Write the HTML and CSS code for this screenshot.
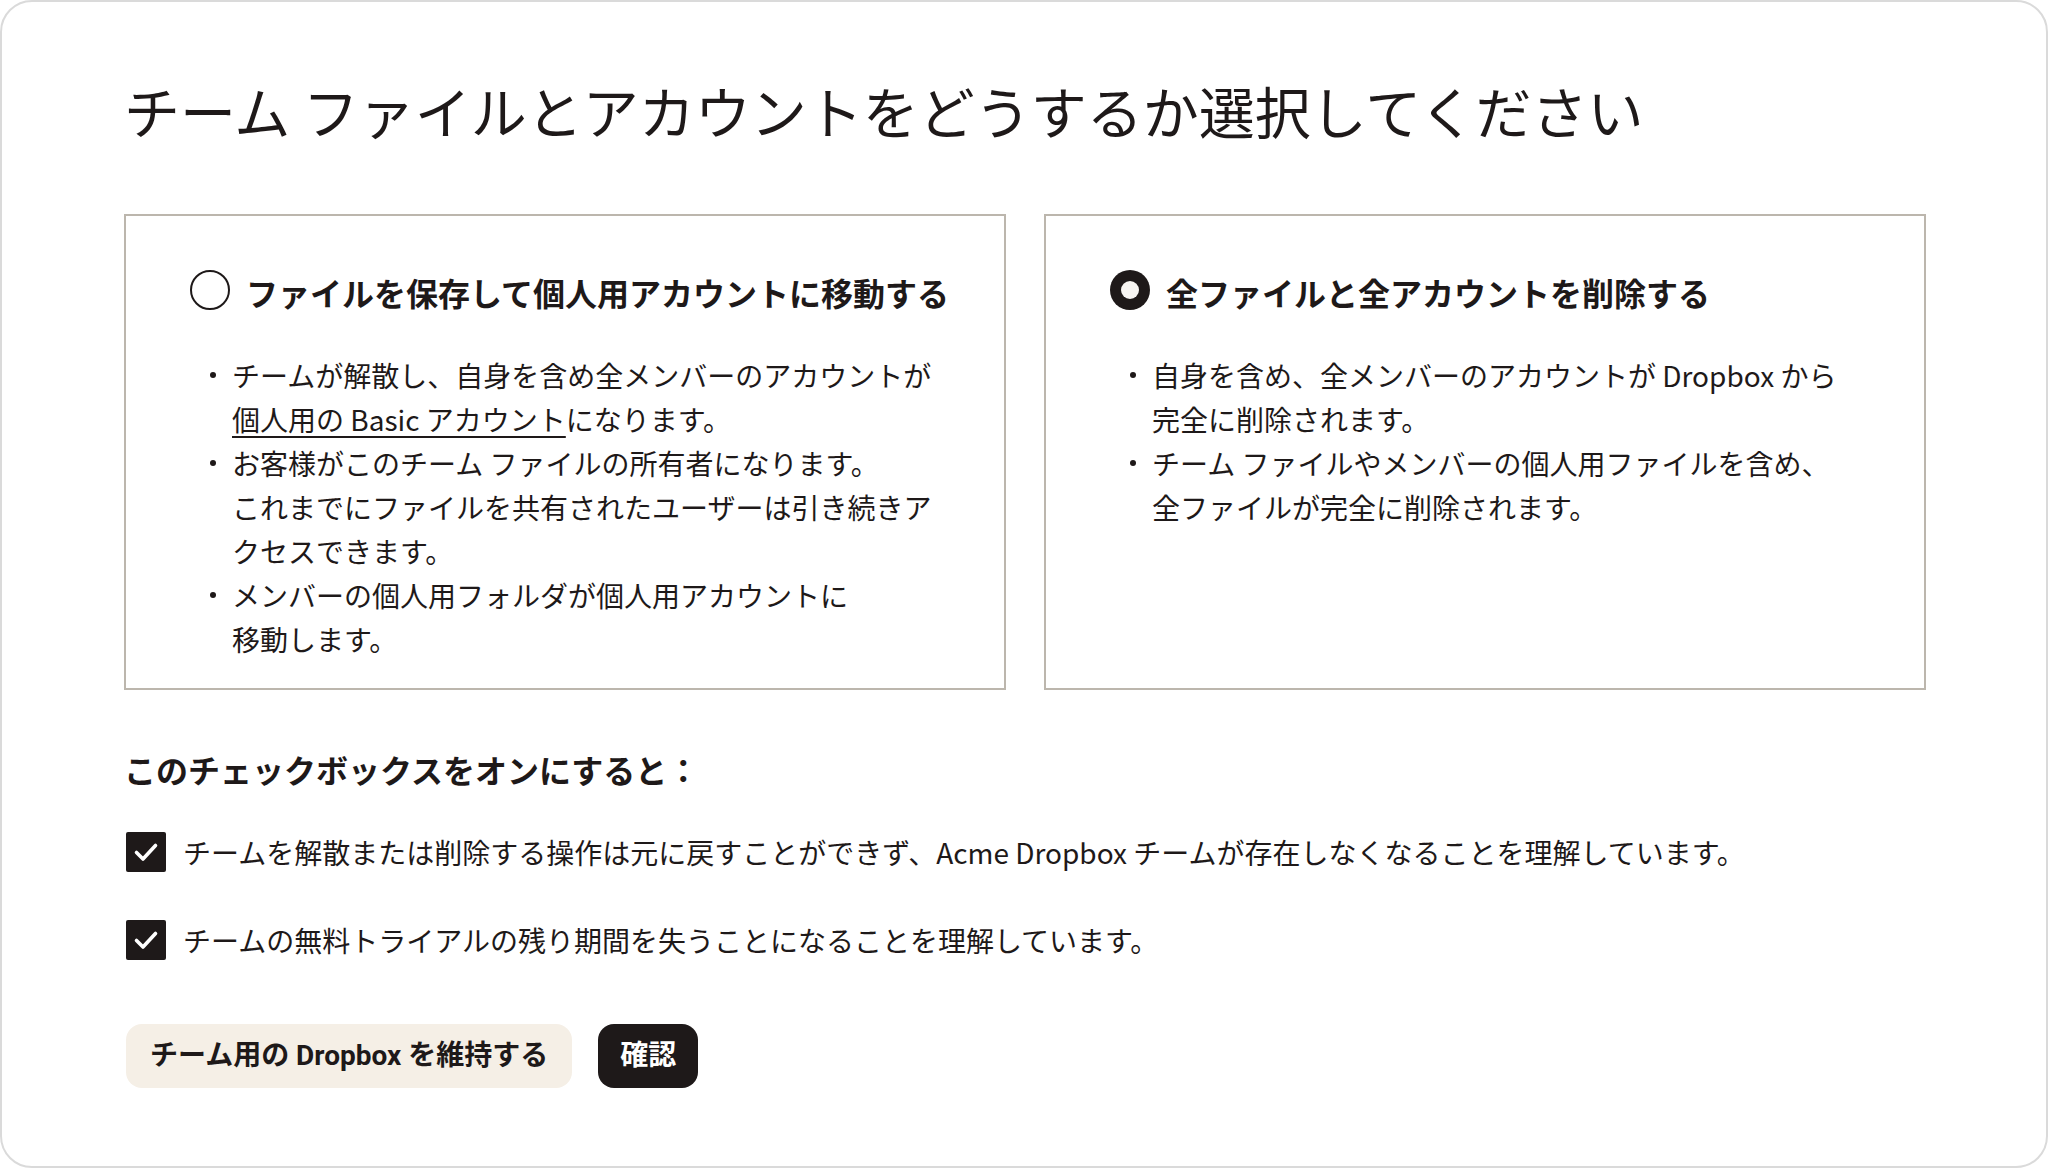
FILE: index.html
```html
<!DOCTYPE html>
<html lang="ja">
<head>
<meta charset="utf-8">
<title>チームの解散</title>
<link rel="stylesheet" href="styles.css">
</head>
<body>
<div class="frame">
  <h1 class="title">チーム ファイルとアカウントをどうするか選択してください</h1>

  <div class="options">
    <div class="option">
      <div class="option-head">
        <svg class="radio" width="40" height="40" viewBox="0 0 40 40"><circle cx="20" cy="20" r="19" fill="none" stroke="#1e1919" stroke-width="2"/></svg>
        <span class="option-title">ファイルを保存して個人用アカウントに移動する</span>
      </div>
      <ul class="bullets">
        <li><span>チームが解散し、自身を含め全メンバーのアカウントが<br><span class="link">個人用の Basic アカウント</span>になります。</span></li>
        <li><span>お客様がこのチーム ファイルの所有者になります。<br>これまでにファイルを共有されたユーザーは引き続きア<br>クセスできます。</span></li>
        <li><span>メンバーの個人用フォルダが個人用アカウントに<br>移動します。</span></li>
      </ul>
    </div>

    <div class="option">
      <div class="option-head">
        <svg class="radio" width="40" height="40" viewBox="0 0 40 40"><circle cx="20" cy="20" r="20" fill="#1e1919"/><circle cx="20" cy="20" r="9" fill="#f7f5f2"/></svg>
        <span class="option-title">全ファイルと全アカウントを削除する</span>
      </div>
      <ul class="bullets">
        <li><span>自身を含め、全メンバーのアカウントが Dropbox から<br>完全に削除されます。</span></li>
        <li><span>チーム ファイルやメンバーの個人用ファイルを含め、<br>全ファイルが完全に削除されます。</span></li>
      </ul>
    </div>
  </div>

  <h2 class="sub">このチェックボックスをオンにすると：</h2>

  <div class="checks">
    <div class="check">
      <svg class="box" width="40" height="40" viewBox="0 0 40 40"><rect width="40" height="40" rx="2" fill="#1e1919"/><path d="M10.5 20.5 L17 27 L29.5 13.5" fill="none" stroke="#ffffff" stroke-width="3.6" stroke-linecap="round" stroke-linejoin="round"/></svg>
      <span>チームを解散または削除する操作は元に戻すことができず、Acme Dropbox チームが存在しなくなることを理解しています。</span>
    </div>
    <div class="check">
      <svg class="box" width="40" height="40" viewBox="0 0 40 40"><rect width="40" height="40" rx="2" fill="#1e1919"/><path d="M10.5 20.5 L17 27 L29.5 13.5" fill="none" stroke="#ffffff" stroke-width="3.6" stroke-linecap="round" stroke-linejoin="round"/></svg>
      <span>チームの無料トライアルの残り期間を失うことになることを理解しています。</span>
    </div>
  </div>

  <div class="actions">
    <button class="btn btn-secondary">チーム用の Dropbox を維持する</button>
    <button class="btn btn-primary">確認</button>
  </div>
</div>
</body>
</html>
```
FILE: styles.css
```css
html, body {
  margin: 0;
  padding: 0;
  background: #ffffff;
}

body {
  font-family: "Noto Sans CJK JP", "Noto Sans", sans-serif;
  color: #1e1919;
}

.frame {
  box-sizing: border-box;
  width: 2048px;
  height: 1168px;
  border: 2px solid #dadada;
  border-radius: 32px;
  padding: 74px 120px 0 122px;
}

.title {
  margin: 0;
  font-size: 56px;
  font-weight: 400;
  line-height: 68px;
  white-space: nowrap;
}

.options {
  display: grid;
  grid-template-columns: 882px 882px;
  gap: 38px;
  margin-top: 70px;
}

.option {
  border: 2px solid #bcb6ad;
  padding: 54px 40px 27px 64px;
}

.option-head {
  display: flex;
  align-items: center;
  gap: 16px;
  height: 40px;
}

.radio {
  flex: 0 0 40px;
  display: block;
}

.option-title {
  font-size: 32px;
  font-weight: 700;
  line-height: 40px;
  padding-top: 3px;
  white-space: nowrap;
}

.bullets {
  list-style: none;
  margin: 43px 0 0;
  padding: 0;
  font-size: 28px;
  line-height: 44px;
}

.bullets li {
  display: flex;
  white-space: nowrap;
}

.bullets li::before {
  content: "";
  flex: 0 0 6px;
  height: 6px;
  border-radius: 50%;
  background: #1e1919;
  margin: 19px 16px 0 20px;
}

.link {
  text-decoration: underline;
  text-decoration-thickness: 1.5px;
  text-underline-offset: 5px;
}

.sub {
  margin: 59px 0 0;
  font-size: 32px;
  font-weight: 700;
  line-height: 40px;
}

.checks {
  display: flex;
  flex-direction: column;
  gap: 48px;
  margin-top: 43px;
  padding-left: 2px;
}

.check {
  display: flex;
  align-items: center;
  gap: 17px;
  font-size: 28px;
  line-height: 40px;
  white-space: nowrap;
}

.box {
  flex: 0 0 40px;
  display: block;
}

.actions {
  display: flex;
  gap: 26px;
  margin-top: 64px;
  padding-left: 2px;
}

.btn {
  height: 64px;
  padding: 0 22px;
  border: 0;
  border-radius: 16px;
  font-family: "Roboto", "Noto Sans CJK JP", "Noto Sans", sans-serif;
  font-size: 28px;
  font-weight: 700;
  line-height: 1;
  cursor: pointer;
}

.btn-secondary {
  padding: 0 24px;
  background: #f5efe6;
  color: #1e1919;
}

.btn-primary {
  background: #1e1919;
  color: #ffffff;
}
```
